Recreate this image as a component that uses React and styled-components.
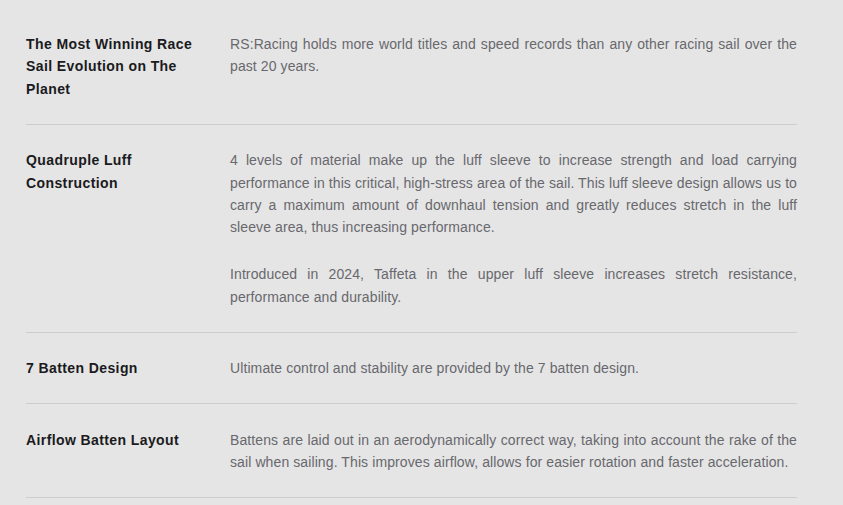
import React from 'react'
import styled, { createGlobalStyle } from 'styled-components'

const GlobalStyle = createGlobalStyle`
    body{
        margin: 0;
        background: #e5e5e5;
        font-family: "Liberation Sans", Arial, sans-serif;
    }
`;

const features = [
    {
        title: 'The Most Winning Race Sail Evolution on The Planet',
        text: ['RS:Racing holds more world titles and speed records than any other racing sail over the past 20 years.']
    },
    {
        title: 'Quadruple Luff Construction',
        text: [
            '4 levels of material make up the luff sleeve to increase strength and load carrying performance in this critical, high-stress area of the sail. This luff sleeve design allows us to carry a maximum amount of downhaul tension and greatly reduces stretch in the luff sleeve area, thus increasing performance.',
            'Introduced in 2024, Taffeta in the upper luff sleeve increases stretch resistance, performance and durability.'
        ]
    },
    {
        title: '7 Batten Design',
        text: ['Ultimate control and stability are provided by the 7 batten design.']
    },
    {
        title: 'Airflow Batten Layout',
        text: ['Battens are laid out in an aerodynamically correct way, taking into account the rake of the sail when sailing. This improves airflow, allows for easier rotation and faster acceleration.']
    }
]

function App() {
    return (
        <>
            <GlobalStyle />
            <FeatureList>
                {features.map((f) => (
                    <FeatureRow key={f.title}>
                        <FeatureTitle>{f.title}</FeatureTitle>
                        <FeatureText>
                            {f.text.map((p, i) => <p key={i}>{p}</p>)}
                        </FeatureText>
                    </FeatureRow>
                ))}
            </FeatureList>
        </>
    )
}

const FeatureList = styled.div`
    width: 771px;
    margin-left: 26px;
    padding-top: 8.5px;
`;

const FeatureRow = styled.div`
    display: grid;
    grid-template-columns: 180px 1fr;
    gap: 24px;
    padding: 24.5px 0 23.5px;
    border-bottom: 1px solid #cdcdcd;
`;

const FeatureTitle = styled.h3`
    margin: 0;
    font-size: 14px;
    line-height: 22.4px;
    letter-spacing: 0.4px;
    font-weight: 700;
    color: #1a1a20;
`;

const FeatureText = styled.div`
    font-size: 14px;
    line-height: 22.4px;
    letter-spacing: 0.1px;
    color: #68686d;
    text-align: justify;
    p{
        margin: 0;
    }
    p + p{
        margin-top: 24.5px;
    }
`;

export default App
